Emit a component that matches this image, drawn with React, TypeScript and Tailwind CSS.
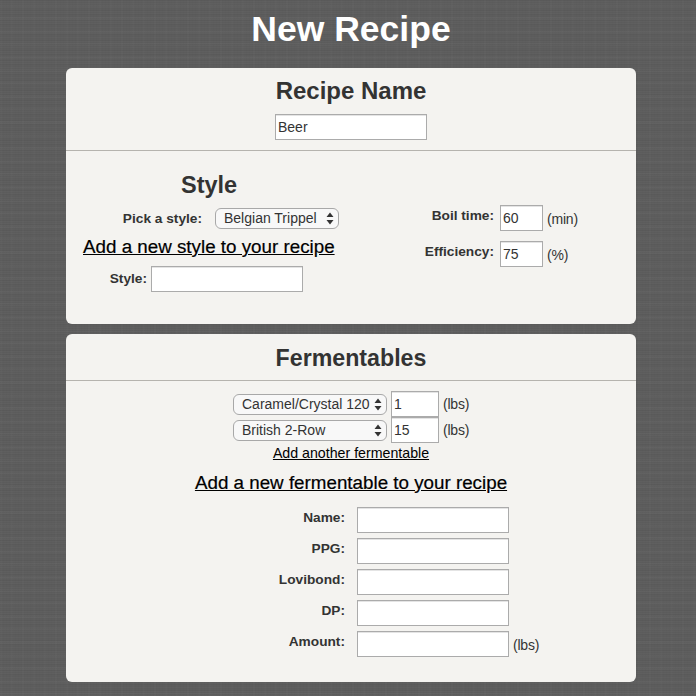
const inputCls =
  'block h-[26px] border border-[#ababab] bg-white px-[2px] text-[14px] text-[#333] shadow-[inset_0_1px_0_#e4e4e4] outline-none';

const Select = ({ value, className }: { value: string; className: string }) => (
  <span className={`relative block ${className}`}>
    <select
      defaultValue={value}
      className="block h-[21px] w-full appearance-none rounded-[6px] border border-[#a8a8a8] bg-[#f8f8f8] pl-[8px] text-[14px] leading-[19px] text-[#333] outline-none"
    >
      <option>{value}</option>
    </select>
    <svg className="pointer-events-none absolute right-[5px] top-[4px]" width="8" height="13" viewBox="0 0 8 13">
      <path d="M4 0.5 L7.5 5 L0.5 5 Z M4 12.5 L0.5 8 L7.5 8 Z" fill="#333" />
    </svg>
  </span>
);

const FieldRow = ({ label, unit }: { label: string; unit?: string }) => (
  <div className="flex items-start">
    <label className="w-[150px] pt-[2px] text-right text-[13.7px] font-bold leading-[18px] text-[#333]">{label}</label>
    <input className={`${inputCls} ml-[12px] w-[152px]`} />
    {unit && <span className="ml-[4px] pt-[5px] text-[14px] leading-[18px] tracking-[-0.2px] text-[#333]">{unit}</span>}
  </div>
);

const App = () => {
  return (
    <div className="h-[696px] overflow-hidden bg-[#5c5c5c] bg-[repeating-linear-gradient(0deg,rgba(255,255,255,0.018)_0px,rgba(255,255,255,0.018)_1px,transparent_1px,transparent_2px),repeating-linear-gradient(0deg,rgba(0,0,0,0.025)_0px,rgba(0,0,0,0.025)_2px,transparent_2px,transparent_5px),repeating-linear-gradient(0deg,rgba(255,255,255,0.015)_0px,rgba(255,255,255,0.015)_3px,transparent_3px,transparent_13px),repeating-linear-gradient(90deg,rgba(0,0,0,0.012)_0px,rgba(0,0,0,0.012)_1px,transparent_1px,transparent_3px),repeating-linear-gradient(90deg,rgba(255,255,255,0.01)_0px,rgba(255,255,255,0.01)_2px,transparent_2px,transparent_11px)] font-['Liberation_Sans',Arial,sans-serif] text-[#333]">
      <div className="ml-[66px] w-[570px]">
        <h1 className="h-[68px] pt-[9px] text-center text-[35.5px] font-bold leading-[41px] text-white">New Recipe</h1>

        <div className="flex flex-col gap-[10px]">
          {/* Recipe */}
          <section className="h-[256px] rounded-[6px] bg-[#f4f3f0]">
            <div className="flex h-[83px] flex-col items-center border-b border-[#b5b3ae] pt-[9px]">
              <h2 className="text-[24px] font-bold leading-[28px]">Recipe Name</h2>
              <input defaultValue="Beer" className={`${inputCls} mt-[9px] w-[152px]`} />
            </div>

            <div className="flex">
              <div className="w-[285px]">
                <h2 className="mt-[20px] pl-[115px] text-[23.5px] font-bold leading-[28px]">Style</h2>
                <div className="mt-[9px] flex items-center">
                  <label className="w-[136px] text-right text-[13.7px] font-bold leading-[21px]">Pick a style:</label>
                  <Select value="Belgian Trippel" className="ml-[13px] w-[124px]" />
                </div>
                <a className="ml-[17px] mt-[6px] block text-[18.8px] leading-[24px] text-black underline [-webkit-text-stroke:0.2px_#000]">
                  Add a new style to your recipe
                </a>
                <div className="mt-[7px] flex items-start">
                  <label className="w-[81px] pt-[4px] text-right text-[13.7px] font-bold leading-[18px]">Style:</label>
                  <input className={`${inputCls} ml-[4px] w-[152px]`} />
                </div>
              </div>

              <div className="pt-[54px]">
                <div className="flex items-start">
                  <label className="w-[143px] pt-[2px] text-right text-[13.7px] font-bold leading-[18px]">Boil time:</label>
                  <input defaultValue="60" className={`${inputCls} ml-[6px] w-[43px]`} />
                  <span className="ml-[4px] pt-[5px] text-[14px] leading-[18px] tracking-[-0.2px]">(min)</span>
                </div>
                <div className="mt-[10px] flex items-start">
                  <label className="w-[143px] pt-[2px] text-right text-[13.7px] font-bold leading-[18px]">Efficiency:</label>
                  <input defaultValue="75" className={`${inputCls} ml-[6px] w-[43px]`} />
                  <span className="ml-[4px] pt-[5px] text-[14px] leading-[18px] tracking-[-0.2px]">(%)</span>
                </div>
              </div>
            </div>
          </section>

          {/* Fermentables */}
          <section className="h-[348px] rounded-[6px] bg-[#f4f3f0]">
            <div className="h-[47px] border-b border-[#b5b3ae] pt-[10px] text-center">
              <h2 className="text-[23.2px] font-bold leading-[28px]">Fermentables</h2>
            </div>

            <div className="mt-[10px] flex flex-col">
              <div className="ml-[167px] flex items-center">
                <Select value="Caramel/Crystal 120" className="w-[154px]" />
                <input defaultValue="1" className={`${inputCls} ml-[4px] w-[48px]`} />
                <span className="ml-[4px] text-[14px] leading-[18px] tracking-[-0.2px]">(lbs)</span>
              </div>
              <div className="ml-[167px] flex items-center">
                <Select value="British 2-Row" className="w-[154px]" />
                <input defaultValue="15" className={`${inputCls} ml-[4px] w-[48px]`} />
                <span className="ml-[4px] text-[14px] leading-[18px] tracking-[-0.2px]">(lbs)</span>
              </div>
              <a className="mt-[1px] text-center text-[14.2px] leading-[18px] text-black underline">Add another fermentable</a>
              <a className="mt-[9px] text-center text-[18.8px] leading-[24px] text-black underline [-webkit-text-stroke:0.2px_#000]">
                Add a new fermentable to your recipe
              </a>
            </div>

            <div className="mt-[12px] flex flex-col gap-[5px] pl-[129px]">
              <FieldRow label="Name:" />
              <FieldRow label="PPG:" />
              <FieldRow label="Lovibond:" />
              <FieldRow label="DP:" />
              <FieldRow label="Amount:" unit="(lbs)" />
            </div>
          </section>
        </div>
      </div>
    </div>
  );
};

export default App;
